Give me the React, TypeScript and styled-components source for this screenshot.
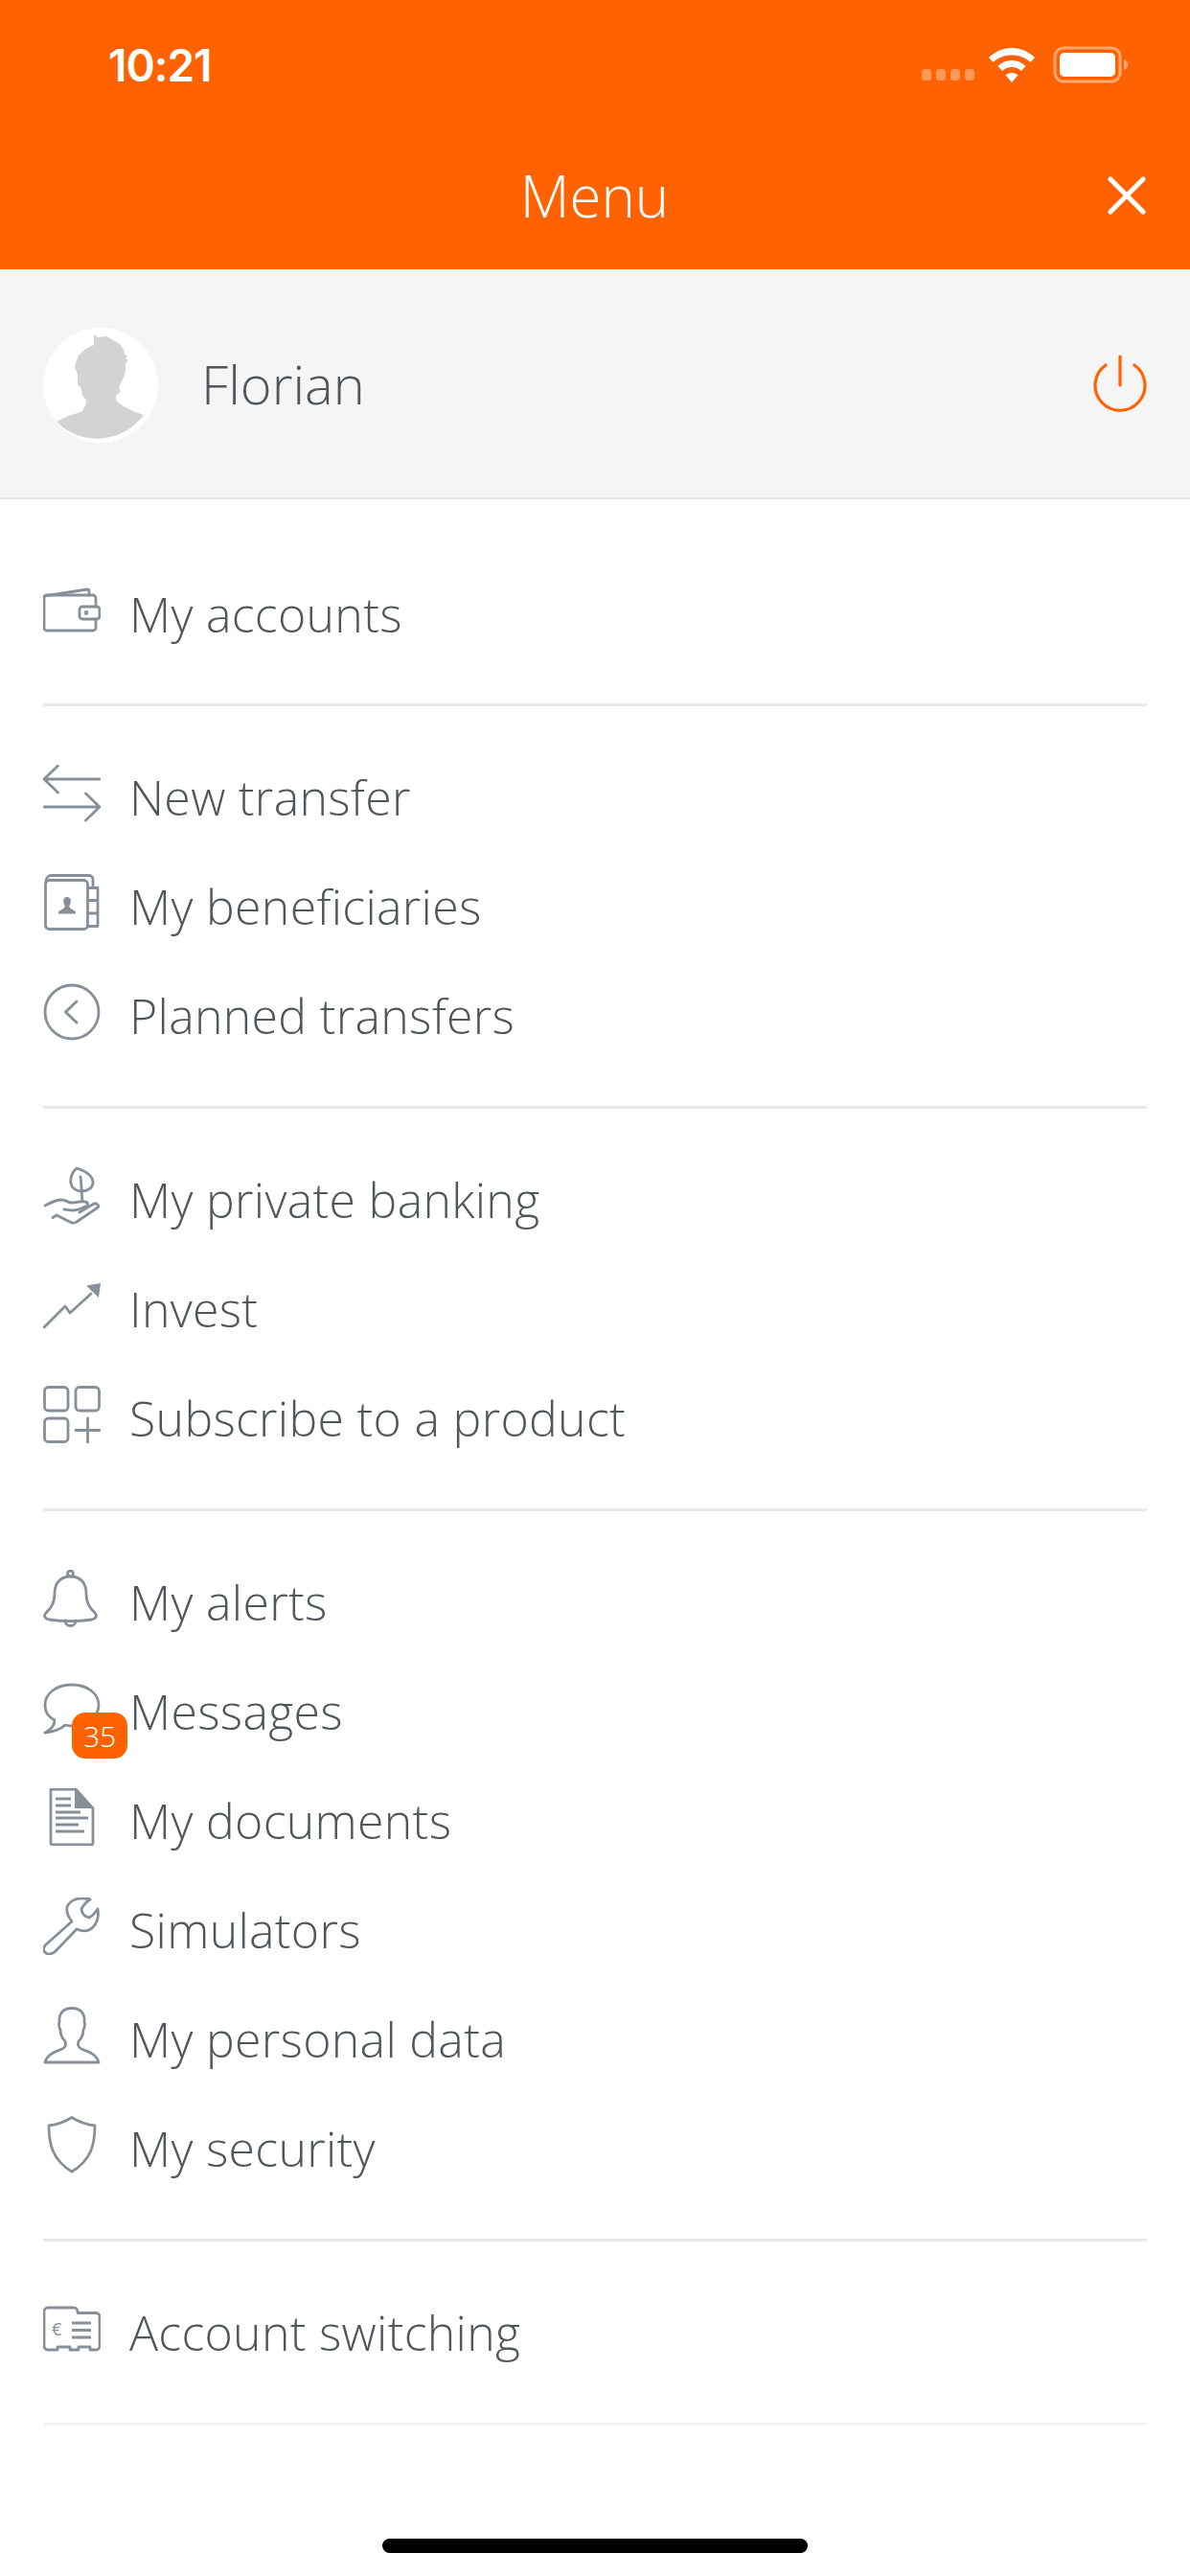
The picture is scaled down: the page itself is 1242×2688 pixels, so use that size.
import styled, { createGlobalStyle } from "styled-components";
import type { ReactNode } from "react";

const GlobalStyle = createGlobalStyle`
  html, body {
    margin: 0;
    padding: 0;
    background: #fff;
  }
  body {
    font-family: "Open Sans", "Noto Sans", sans-serif;
  }
`;

const Page = styled.div`
  width: 1242px;
  height: 2688px;
  display: flex;
  flex-direction: column;
  background: #fff;
  overflow: hidden;
`;

const Header = styled.header`
  height: 281px;
  background: #ff6200;
  color: #fff;
  display: flex;
  flex-direction: column;
  flex: none;
`;

const StatusBar = styled.div`
  height: 136px;
  padding: 0 62px 0 113px;
  display: flex;
  align-items: center;
  justify-content: space-between;
  box-sizing: border-box;
`;

const Time = styled.span`
  font-family: Inter, sans-serif;
  font-size: 46px;
  font-weight: 600;
  letter-spacing: -1px;
`;

const StatusIcons = styled.div`
  display: flex;
  align-items: center;
`;

const NavBar = styled.div`
  flex: 1;
  padding: 0 46px 10px 45px;
  display: grid;
  grid-template-columns: 1fr auto 1fr;
  align-items: center;
`;

const Title = styled.h1`
  grid-column: 2;
  margin: 0;
  font-size: 60px;
  font-weight: 300;
  color: #fff;
`;

const CloseButton = styled.div`
  grid-column: 3;
  justify-self: end;
  display: flex;
`;

const Profile = styled.div`
  height: 240px;
  flex: none;
  box-sizing: border-box;
  padding: 0 45px;
  background: #f5f5f5;
  border-bottom: 2px solid #e6e6e6;
  display: flex;
  align-items: center;
`;

const Avatar = styled.svg`
  width: 120px;
  height: 120px;
  flex: none;
  margin-top: 4px;
`;

const UserName = styled.span`
  margin-left: 45px;
  flex: 1;
  font-size: 56px;
  font-weight: 350;
  color: #50575c;
`;

const Section = styled.section<{ $first?: boolean; $faint?: boolean }>`
  margin: 0 45px;
  padding: ${(p) => (p.$first ? "63px 0 36px" : "38px 0 37px")};
  border-bottom: 3px solid ${(p) => (p.$faint ? "#f3f3f3" : "#e8e8e8")};
`;

const Row = styled.div`
  height: 114px;
  display: flex;
  align-items: center;
`;

const IconBox = styled.span<{ $level?: boolean }>`
  position: relative;
  width: 60px;
  height: 60px;
  flex: none;
  display: flex;
  margin-bottom: ${(p) => (p.$level ? "0" : "8px")};
`;

const Glyph = styled.svg.attrs({ viewBox: "0 0 60 60", fill: "none" })`
  width: 60px;
  height: 60px;
  stroke: #87909a;
  stroke-width: 2.8;
  stroke-linecap: round;
  stroke-linejoin: round;
`;

const Badge = styled.span`
  position: absolute;
  left: 30px;
  top: 31px;
  width: 58px;
  height: 48px;
  border-radius: 14px;
  background: #ff6200;
  color: #fff;
  font-size: 30px;
  font-weight: 300;
  display: flex;
  align-items: center;
  justify-content: center;
`;

const Label = styled.span`
  margin-left: 30px;
  font-size: 50px;
  font-weight: 350;
  letter-spacing: 0.3px;
  color: #50575c;
`;

const HomeArea = styled.div`
  flex: 1;
  display: flex;
  align-items: flex-end;
  justify-content: center;
  padding-bottom: 24px;
`;

const HomeIndicator = styled.div`
  width: 444px;
  height: 15px;
  border-radius: 8px;
  background: #000;
`;

const Wallet = () => (
  <Glyph>
    <path d="M55 22V13a3 3 0 0 0-3-3H4a3 3 0 0 0-3 3v31a3 3 0 0 0 3 3h48a3 3 0 0 0 3-3v-9" />
    <path d="M1 11 46 4a2 2 0 0 1 2 2v4" />
    <rect x="38" y="22" width="21" height="13" rx="3" />
    <circle cx="45" cy="28.5" r="1" />
  </Glyph>
);

const Transfer = () => (
  <Glyph>
    <path d="M59 15H1M15.5 1 1 15l14.5 14M1 44h58M44.5 30 59 44 44.5 58" />
  </Glyph>
);

const AddressBook = () => (
  <Glyph>
    <rect x="2.5" y="6.5" width="44" height="51" rx="4" />
    <path d="M3 8a6 6 0 0 1 5-6.5h40a4 4 0 0 1 4 4V14M46.5 14.5h10.5v40H46.5M46.5 27.5H57M46.5 41H57" />
    <path
      fill="#87909a"
      stroke="none"
      d="M25 24a3.800 3.800 0 0 1 3.800 4.500c0 1.800-.8 3.300-1.300 4.300-.4 1.700.4 2.600 1.700 3.400l4.800 3v2.300H16v-2.300l4.800-3c1.300-.8 2.100-1.700 1.700-3.400-.5-1-1.300-2.500-1.300-4.300A3.800 3.800 0 0 1 25 24z"
    />
  </Glyph>
);

const Clock = () => (
  <Glyph>
    <circle cx="30" cy="30" r="28" />
    <path d="M35 19 23.500 30 35 41" strokeWidth="3" />
  </Glyph>
);

const PlantHand = () => (
  <Glyph>
    <path d="M35 1C30 5 28 12 29 17c1 5 6 8 11 8 7 0 12-4 12-9C52 9 44 4 35 1z" />
    <path d="M39 10c1 6 1 16 2 25" />
    <path d="M2 40c6-3 11-6 17-6 5 0 7 3 11 3 5 0 8-2 13-1 5 0 4 4 1 5-4 2-8 4-13 4-4 0-7-1-9-1" />
    <path d="M38 47 53 38c3-1 6 2 4 4L35 57c-2 1.500-4 1.500-6 .5L14 50l-4 2.500" />
  </Glyph>
);

const TrendUp = () => (
  <Glyph>
    <path d="M1 53 23 31l5 7 22-20" />
    <path fill="#87909a" stroke="none" d="M60 7 45 9.500 58 22z" />
  </Glyph>
);

const Products = () => (
  <Glyph>
    <rect x="1.500" y="1.500" width="24.500" height="24.500" rx="4" />
    <rect x="34" y="1.500" width="24.500" height="24.500" rx="4" />
    <rect x="1.500" y="34" width="24.500" height="24.500" rx="4" />
    <path d="M34 46.500h25M46.500 34v25" />
  </Glyph>
);

const Bell = () => (
  <Glyph>
    <circle cx="28.500" cy="4" r="3" />
    <path d="M28.500 7C17 7 12 15 12 25c0 11-5 16-9 20-3 3-1 6 3 7 14 2 31 2 45 0 4-1 6-4 3-7-4-4-9-9-9-20C45 15 40 7 28.500 7z" />
    <path d="M23 53a5.500 5.500 0 0 0 11 0" />
  </Glyph>
);

const Bubble = () => (
  <Glyph>
    <path d="M30 2C14 2 2 11 2 23c0 7 4 13 10 16 0 5-4 10-10 13 8-1 16-3 21-8 2 .5 5 1 7 1 16 0 28-10 28-22S46 2 30 2z" />
  </Glyph>
);

const Doc = () => (
  <Glyph>
    <path d="M8 1h26l18 20v36a2 2 0 0 1-2 2H10a2 2 0 0 1-2-2z" />
    <path fill="#87909a" stroke="none" d="M33 1 53 21H33z" />
    <path strokeLinecap="butt" strokeWidth="3" d="M13 11h16M13 18h16M13 25h26M13 31h34M13 38h24M13 45h30" />
  </Glyph>
);

const Wrench = () => (
  <Glyph>
    <path d="M2 50 30 25c-4-5-6-10-5-15 2-6 10-10 17-9 3 0 6 0 7 1-3 2-7 6-9 10 0 4 3 8 8 9 4-2 7-6 9-9 1 6 1 13-5 19-4 4-10 5-17 2L13 56c-3 3-8 4-10 2-3-2-3-5-1-8z" />
  </Glyph>
);

const Person = () => (
  <Glyph>
    <path d="M2 58c2-8 10-11 18-14 4-2 4-5 3-8-3-3-5-8-5-12-2-4-2-6-1-8-1-10 5-14.500 13-14.500S44 6 43 16c1 2 1 4-1 8 0 4-2 9-5 12-1 3-1 6 3 8 8 3 16 6 18 14z" />
  </Glyph>
);

const Shield = () => (
  <Glyph>
    <path d="M30 1.500C23 6 14 9 6 10c0 20 4 36 24 48 20-12 24-28 24-48-8-1-17-4-24-8.500z" />
  </Glyph>
);

const SwitchCard = () => (
  <Glyph>
    <path d="M1 12a4 4 0 0 1 4-4h27a4 4 0 0 1 4 4v1.500h19a4 4 0 0 1 4 4V48a4 4 0 0 1-4 4h-6v-3H37v3h-9v-3H15v3H5a4 4 0 0 1-4-4z" />
    <path strokeLinecap="butt" strokeWidth="3" d="M30 24h20M30 31.500h20M30 39h20" />
    <text x="9" y="37" fontSize="18" fill="#87909a" stroke="none" fontFamily="Open Sans, sans-serif">
      €
    </text>
  </Glyph>
);

type Item = { label: string; icon: ReactNode; badge?: string; level?: boolean };

const groups: Item[][] = [
  [{ label: "My accounts", icon: <Wallet />, level: true }],
  [
    { label: "New transfer", icon: <Transfer /> },
    { label: "My beneficiaries", icon: <AddressBook /> },
    { label: "Planned transfers", icon: <Clock /> },
  ],
  [
    { label: "My private banking", icon: <PlantHand /> },
    { label: "Invest", icon: <TrendUp /> },
    { label: "Subscribe to a product", icon: <Products /> },
  ],
  [
    { label: "My alerts", icon: <Bell /> },
    { label: "Messages", icon: <Bubble />, badge: "35", level: true },
    { label: "My documents", icon: <Doc /> },
    { label: "Simulators", icon: <Wrench /> },
    { label: "My personal data", icon: <Person /> },
    { label: "My security", icon: <Shield /> },
  ],
  [{ label: "Account switching", icon: <SwitchCard /> }],
];

function App() {
  return (
    <Page>
      <GlobalStyle />
      <Header>
        <StatusBar>
          <Time>10:21</Time>
          <StatusIcons>
            <svg width="218" height="40" viewBox="0 0 218 40">
              <g fill="#fff" fillOpacity="0.35">
                <rect x="0" y="24" width="10" height="12" rx="3.500" />
                <rect x="15" y="24" width="10" height="12" rx="3.500" />
                <rect x="30" y="24" width="10" height="12" rx="3.500" />
                <rect x="45" y="24" width="10" height="12" rx="3.500" />
              </g>
              <path
                fill="#fff"
                d="M94 2c-9 0-17 3.500-24 10l4.500 5C80 12 86.500 9.500 94 9.500S108 12 113.500 17l4.500-5C111 5.500 103 2 94 2zm0 13c-5.500 0-10.500 2-14.500 6l4.500 5c3-2.500 6.300-4 10-4s7 1.500 10 4l4.500-5c-4-4-9-6-14.500-6zm0 13c-2.500 0-4.800 1-6.500 2.500L94 38l6.500-7.500C98.800 29 96.500 28 94 28z"
              />
              <rect x="139" y="2" width="68" height="35" rx="9" fill="none" stroke="#fff" strokeOpacity="0.45" strokeWidth="3" />
              <rect x="144" y="7" width="58" height="25" rx="5" fill="#fff" />
              <path d="M211 14c3 1 4 3 4 5.500s-1 4.500-4 5.500z" fill="#fff" fillOpacity="0.45" />
            </svg>
          </StatusIcons>
        </StatusBar>
        <NavBar>
          <Title>Menu</Title>
          <CloseButton>
            <svg width="40" height="40" viewBox="0 0 40 40" fill="none" stroke="#fff" strokeWidth="5" strokeLinecap="round">
              <path d="M3 3l34 34M37 3 3 37" />
            </svg>
          </CloseButton>
        </NavBar>
      </Header>
      <Profile>
        <Avatar viewBox="0 0 120 120">
          <circle cx="60" cy="60" r="60" fill="#fff" />
          <path
            fill="#d3d3d3"
            d="M53 7l4 3 9-1 7 4 7 4 4 6 1 5 3 1-2 3 3 2-3 3 0 8-2 7-3 6-2 5 2 3-5 5 0 4 2 3 6 4 10 5 11 4 A60 60 0 0 1 14 98l12-6 10-3 5-2 4-8 0-4-4-4-1-6-1-3-3-3 0-10-3-8 1-4 3-8 5-5 6-4 5-2z"
          />
        </Avatar>
        <UserName>Florian</UserName>
        <svg width="56" height="60" viewBox="0 0 56 60" fill="none" stroke="#ff6200" strokeWidth="3.200" strokeLinecap="round">
          <path d="M28 2v30M13 11a26 26 0 1 0 30 0" />
        </svg>
      </Profile>
      {groups.map((group, i) => (
        <Section key={i} $first={i === 0} $faint={i === groups.length - 1}>
          {group.map((item) => (
            <Row key={item.label}>
              <IconBox $level={item.level}>
                {item.icon}
                {item.badge ? <Badge>{item.badge}</Badge> : null}
              </IconBox>
              <Label>{item.label}</Label>
            </Row>
          ))}
        </Section>
      ))}
      <HomeArea>
        <HomeIndicator />
      </HomeArea>
    </Page>
  );
}

export default App;
